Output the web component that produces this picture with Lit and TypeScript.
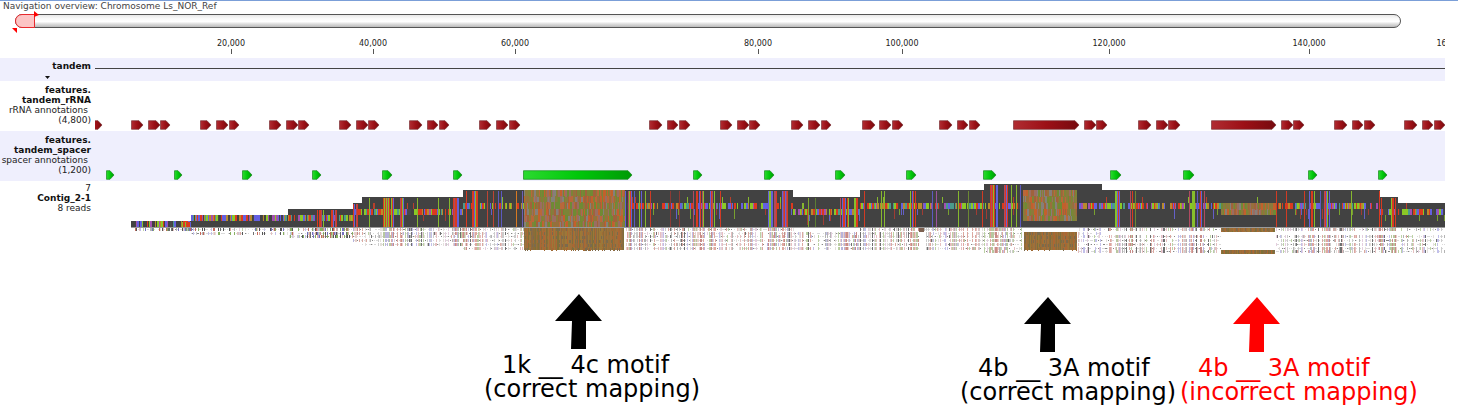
import { LitElement, html, svg, css } from "lit";
import { customElement, property } from "lit/decorators.js";

type Ink = { color: string; d: string };

const PLOT_START = 95;
const PLOT_WIDTH = 1350;

const RULER = [
  [231, "20,000"], [373, "40,000"], [515, "60,000"], [758, "80,000"],
  [902, "100,000"], [1109, "120,000"], [1309, "140,000"], [1453, "160,000"],
] as const;

const RRNA: number[][] = [
  [90, 102], [131, 143], [148, 160], [160, 170], [200, 211], [216, 228], [229, 239],
  [269, 281], [286, 298], [298, 309], [339, 351], [356, 368], [368, 379],
  [409, 422], [427, 438], [439, 449], [479, 491], [496, 508], [509, 520],
  [649, 662], [667, 678], [679, 690], [720, 732], [737, 749], [749, 760],
  [791, 803], [808, 820], [821, 831], [862, 875], [879, 891], [892, 903],
  [939, 952], [957, 968], [969, 980], [1013, 1079], [1084, 1096], [1096, 1107],
  [1138, 1151], [1156, 1168], [1168, 1180], [1211, 1276], [1281, 1293], [1293, 1304],
  [1334, 1347], [1352, 1363], [1364, 1375], [1404, 1417], [1422, 1433], [1434, 1445],
];

const SPACERS: number[][] = [
  [106, 114], [174, 182], [242, 252], [312, 321], [382, 392], [453, 462], [523, 632],
  [693, 702], [764, 774], [835, 845], [906, 916], [983, 996], [1110, 1121],
  [1183, 1194], [1308, 1317], [1378, 1387],
];

// x start, x end, top of coverage, top of the variant band, number of read rows
const COVERAGE: number[][] = [
  [131, 191, 40, 40, 1], [191, 288, 34, 34, 2], [288, 353, 28, 34, 3],
  [353, 362, 22, 28, 4], [362, 463, 16, 28, 5], [463, 793, 9, 22, 6],
  [793, 860, 16, 28, 6], [860, 984, 9, 22, 6], [984, 1102, 3, 22, 7],
  [1102, 1380, 9, 22, 7], [1380, 1398, 16, 28, 7], [1398, 1445, 22, 28, 7],
];

const CLUSTERS: number[][] = [
  [181, 191], [316, 324], [331, 337], [353, 358], [383, 394], [400, 404], [453, 459],
  [463, 468], [472, 478], [625, 632], [639, 642], [693, 705], [710, 716], [767, 777],
  [782, 788], [839, 849], [854, 858], [910, 919], [989, 999], [1004, 1008],
  [1115, 1120], [1130, 1133], [1189, 1195], [1200, 1205], [1309, 1315], [1324, 1330],
  [1379, 1383], [1390, 1397],
];

const SINGLES: [number, string][] = [
  [369, "#86b82e"], [417, "#86b82e"], [438, "#86b82e"], [449, "#86b82e"],
  [487, "#bd4434"], [493, "#bd4434"], [498, "#5c5ac0"], [501, "#5c5ac0"],
  [516, "#d77a22"], [522, "#6c5fb8"], [634, "#5c5ac0"], [645, "#86b82e"],
  [650, "#d13b24"], [670, "#8c3a34"], [679, "#8c3a34"], [720, "#d13b24"],
  [808, "#7ea832"], [815, "#5c7d34"], [864, "#d13b24"], [881, "#86b82e"],
  [884, "#86b82e"], [932, "#5c5ac0"], [936, "#9c52a0"], [958, "#86b82e"],
  [968, "#6c8834"], [982, "#d13b24"], [1011, "#86b82e"], [1016, "#86b82e"],
  [1020, "#5c5ac0"], [1135, "#6c8834"], [1197, "#5c5ac0"], [1276, "#d13b24"],
  [1286, "#d13b24"], [1304, "#d13b24"], [1320, "#5c5ac0"], [1351, "#86b82e"],
];

const BRIGHT = ["#dc3a1e", "#8ac926", "#6460e0", "#dc3a1e", "#8ac926", "#6460e0", "#b98a2c", "#a350b0", "#4b9b8c", "#484848"];
const EARTH = ["#8a7a3c", "#b8683a", "#7c8438", "#96703c", "#a0623c", "#85807a", "#c2602c", "#6f8a34", "#9a6d62"];
const OCHRE = ["#95703a", "#8c6c38", "#a0703a", "#8a6a44", "#9c7838", "#7e7038", "#ac6634"];
const PALE = ["#cccccc", "#b4b4b4", "#e6c0c0", "#bcd2a4", "#c2c0ea", "#dca8a0", "#e4e0dc", "#707070", "#e4cede"];

function generator(seed: number) {
  let s = seed;
  return () => {
    s = (s * 1664525 + 1013904223) >>> 0;
    return s / 4294967296;
  };
}

function buildCoverage(): Ink[] {
  const rnd = generator(4217);
  const layers: Ink[] = [];
  let layer = new Map<string, string>();
  const box = (color: string, x: number, y: number, w: number, h: number) =>
    layer.set(color, (layer.get(color) ?? "") + `M${x} ${y}h${w}v${h}h${-w}z`);
  const flush = () => {
    layer.forEach((d, color) => layers.push({ color, d }));
    layer = new Map();
  };
  const pick = (list: string[]) => list[Math.floor(rnd() * list.length)];
  const spanAt = (x: number) => COVERAGE.find(([a, b]) => x >= a && x < b)!;

  for (const [a, b, top] of COVERAGE) box("#424242", a, top, b - a, 46 - top);
  flush();

  // variant band, with short tails hanging under it
  for (let x = 131; x < 1445; ) {
    const [, end, , band] = spanAt(x);
    const w = Math.min(rnd() < 0.6 ? 1 : 2, end - x);
    if (x < 181 ? rnd() < 0.55 : rnd() < 0.84) box(pick(BRIGHT), x, band, w, 6);
    if (x > 353 && rnd() < 0.1) box(pick(["#6460c8", "#a03c34", "#78a030"]), x, band + 6, 1, rnd() < 0.6 ? 6 : 10);
    if (x > 362 && rnd() < 0.03) box(pick(["#b8402c", "#86b82e"]), x, band - 6, 1, 6);
    x += w;
  }
  flush();

  for (const [x, color] of SINGLES) {
    const top = spanAt(x)[2];
    box(color, x, top + 1, 1, 45 - top);
  }
  for (const [a, b] of CLUSTERS) {
    for (let x = a; x < b; x++) {
      const top = spanAt(x)[2];
      if (rnd() < 0.75) box(pick(["#d93a20", "#d93a20", "#86bf2c", "#6460d8", "#b04a60"]), x, top + 1, 1, 45 - top);
    }
  }
  flush();

  // aligned reads
  for (const [a, b, , , rows] of COVERAGE) {
    for (let x = a; x < b; x++) {
      const dense = CLUSTERS.some(([c, d]) => x >= c && x < d);
      const color = dense ? pick(["#e0a8a0", "#c88c88", "#b8b4dc", "#b8c8a0", "#e8d0cc"]) : pick(PALE);
      const weight = dense ? 0.8 : rnd() < 0.45 ? 0.8 : 0.08;
      for (let r = 0; r < rows; r++) {
        if (r === 1 && x > 1102) continue;
        if (r === 0 && x > 793 && x < 860) continue;
        const y = 47 + Math.round(r * 3.7);
        const early = x < 353 && rnd() < 0.55;
        if (rnd() < weight) box(early ? pick(["#c46a5c", "#86b060", "#7470c0", "#555555"]) : color, x, y, 1, 3);
        else if (rnd() < 0.4) box(rnd() < 0.2 ? "#888888" : "#dadada", x, y + 1, 1, 1);
      }
    }
  }
  flush();

  const mosaic = (a: number, b: number, top: number, rows: number) => {
    for (let r = 0; r < rows; r++)
      for (let x = a; x < b; ) {
        const w = Math.min(rnd() < 0.6 ? 1 : 2, b - x);
        box(pick(EARTH), x, top + Math.round(r * 6.2), w, 7);
        x += w;
      }
    flush();
  };
  mosaic(524, 625, 9, 6);
  mosaic(1023, 1077, 9, 5);
  mosaic(1221, 1276, 22, 2);
  box("#424242", 1023, 40, 54, 7);
  box("#424242", 1221, 34, 55, 12);
  flush();

  const block = (a: number, b: number, top: number, height: number) => {
    for (let x = a; x < b; x++) box(pick(OCHRE), x, top, 1, height);
    flush();
    for (let i = 0; i < (b - a) * height * 0.1; i++)
      box(pick(["#7c6a4c", "#a06a34"]), a + Math.floor(rnd() * (b - a)), top + Math.floor((rnd() * height) / 4) * 4, 1, Math.min(3, height));
    flush();
  };
  box("#ffffff", 524, 47, 102, 30);
  box("#ffffff", 1022, 47, 56, 30);
  box("#ffffff", 1221, 47, 55, 30);
  box("#ffffff", 919, 51, 7, 24);
  flush();
  box("#7c6050", 919, 47, 5, 4);
  block(524, 624, 47, 22);
  block(1024, 1077, 51, 18);
  block(1221, 1275, 47, 4);
  block(1221, 1275, 69, 4);

  for (const [a, b] of COVERAGE) box("#9a9a9a", a, 46, b - a, 1);
  flush();
  return layers;
}

const COVERAGE_INK = buildCoverage();

@customElement("annotation-arrows")
class AnnotationArrows extends LitElement {
  @property({ attribute: false }) items: number[][] = [];
  @property() tone = "red";

  static styles = css`
    :host { display: block; }
    .plot { display: block; width: 100%; height: 10px; }
  `;

  render() {
    const red = this.tone === "red";
    const stops = red ? ["#b02c32", "#9c1016", "#760a0e"] : ["#2cda30", "#00c80a", "#009a06"];
    return html`<svg class="plot" viewBox="${PLOT_START} 0 ${PLOT_WIDTH} 10" preserveAspectRatio="none" aria-hidden="true">
      <defs>
        <linearGradient id="fill">
          <stop offset="0" stop-color=${stops[0]} />
          <stop offset="0.5" stop-color=${stops[1]} />
          <stop offset="1" stop-color=${stops[2]} />
        </linearGradient>
      </defs>
      ${this.items.map(([a, b]) => svg`<path d="M${a + 0.5} .7H${b - 4}L${b} 5L${b - 4} 9.3H${a + 0.5}Z"
        fill="url(#fill)" stroke=${red ? "#7c3438" : "#178a1c"} stroke-width="0.7" />`)}
    </svg>`;
  }
}

@customElement("app-root")
class AppRoot extends LitElement {
  static styles = css`
    :host {
      display: block;
      background: #fff;
      color: #222;
      font-family: "DejaVu Sans", sans-serif;
      font-size: 9px;
      line-height: 10px;
      border-top: 1px solid #7b9fd8;
    }
    .title { margin: 0; padding-left: 3px; font-size: 9px; font-weight: 400; line-height: 10px; color: #444; }
    .overview {
      position: relative;
      box-sizing: border-box;
      height: 14px;
      margin: 3px 57px 0 15px;
      border: 1px solid #555;
      border-radius: 7px;
      background: linear-gradient(#e8e8e8, #fafafa 30%, #fff 55%, #ddd 75%, #bbb);
    }
    .window {
      position: absolute;
      inset: -1px auto -1px -1px;
      width: 20px;
      box-sizing: border-box;
      border: 1px solid #e8282c;
      border-radius: 7px 0 0 7px;
      background: #fcc4c4;
    }
    .handles { position: absolute; left: -4px; top: -5px; }
    .view { padding-right: 13px; }
    .ruler { position: relative; height: 30px; margin-left: 95px; overflow: hidden; font-size: 8px; }
    .mark { position: absolute; top: 11px; display: flex; flex-direction: column; align-items: center; width: 60px; margin-left: -30px; }
    .mark::after { content: ""; width: 1px; height: 5px; background: #555; }
    .track { display: grid; grid-template-columns: 91px 1fr; column-gap: 4px; }
    .tinted { background: #efeffd; }
    .label { text-align: right; white-space: nowrap; }
    .name { color: #111; font-weight: 700; }
    .kind { padding-right: 3px; }
    .sequence { height: 23px; }
    .sequence .label { padding-top: 3px; }
    .toggle { display: block; margin: 5px 0 0 45px; }
    .line { height: 1px; margin-top: 10px; background: #444; }
    .annotated { padding: 4px 0 1px; }
    .annotated .label { padding-bottom: 5px; }
    .annotated annotation-arrows { align-self: end; }
    .reads .label { padding-top: 2px; }
    .coverage { display: block; width: 100%; height: 76px; }
    .arrows { display: block; width: 100%; height: 58px; margin-top: 37px; }
    .callouts {
      display: grid;
      grid-template-columns: 484fr 476fr 220fr 278fr;
      padding-bottom: 2px;
      color: #000;
      font-size: 24px;
      line-height: 24px;
      white-space: nowrap;
    }
    .callout { margin: 0; padding-top: 4px; }
    .first { grid-column: 2; padding-top: 1px; }
    .motif { padding-left: 18px; }
    .wrong { color: #f00; }
  `;

  private coverage() {
    return html`<svg class="coverage" viewBox="${PLOT_START} 0 ${PLOT_WIDTH} 76" preserveAspectRatio="none"
      shape-rendering="crispEdges" role="img" aria-label="Contig_2-1">
      ${COVERAGE_INK.map((ink) => svg`<path fill=${ink.color} d=${ink.d} />`)}
    </svg>`;
  }

  render() {
    return html`
      <h1 class="title">Navigation overview: Chromosome Ls_NOR_Ref</h1>
      <div class="overview">
        <div class="window"></div>
        <svg class="handles" width="30" height="24" aria-hidden="true">
          <path d="M22 1L27 5L22 7ZM0 18H5V23Z" fill="#f00" />
        </svg>
      </div>
      <main class="view">
        <div class="ruler">
          ${RULER.map(([x, text]) => html`<span class="mark" style="left:${((x - PLOT_START) / PLOT_WIDTH) * 100}%">${text}</span>`)}
        </div>
        <section class="track tinted sequence">
          <div class="label">
            <div class="name">tandem</div>
            <svg class="toggle" width="5" height="3" aria-hidden="true"><path d="M0 0H5L2.5 3Z" fill="#111" /></svg>
          </div>
          <div class="line"></div>
        </section>
        <section class="track annotated">
          <div class="label">
            <div class="name">features.</div>
            <div class="name">tandem_rRNA</div>
            <div class="kind">rRNA annotations</div>
            <div>(4,800)</div>
          </div>
          <annotation-arrows .items=${RRNA} tone="red"></annotation-arrows>
        </section>
        <section class="track tinted annotated">
          <div class="label">
            <div class="name">features.</div>
            <div class="name">tandem_spacer</div>
            <div class="kind">spacer annotations</div>
            <div>(1,200)</div>
          </div>
          <annotation-arrows .items=${SPACERS} tone="green"></annotation-arrows>
        </section>
        <section class="track reads">
          <div class="label">
            <div>7</div>
            <div class="name">Contig_2-1</div>
            <div>8 reads</div>
          </div>
          ${this.coverage()}
        </section>
      </main>
      <svg class="arrows" viewBox="0 0 1458 58" preserveAspectRatio="none" aria-hidden="true">
        <path d="M579 0L602 27H586V55H571L572 27H555Z" fill="#000" />
        <path d="M1048 3L1071 30H1055V58H1040L1041 30H1024Z" fill="#000" />
        <path d="M1257 3L1280 30H1264V58H1249L1250 30H1233Z" fill="#f00" />
      </svg>
      <section class="callouts">
        <p class="callout first"><span class="motif">1k __ 4c motif</span><br />(correct mapping)</p>
        <p class="callout"><span class="motif">4b __ 3A motif</span><br />(correct mapping)</p>
        <p class="callout wrong"><span class="motif">4b __ 3A motif</span><br />(incorrect mapping)</p>
      </section>
    `;
  }
}
